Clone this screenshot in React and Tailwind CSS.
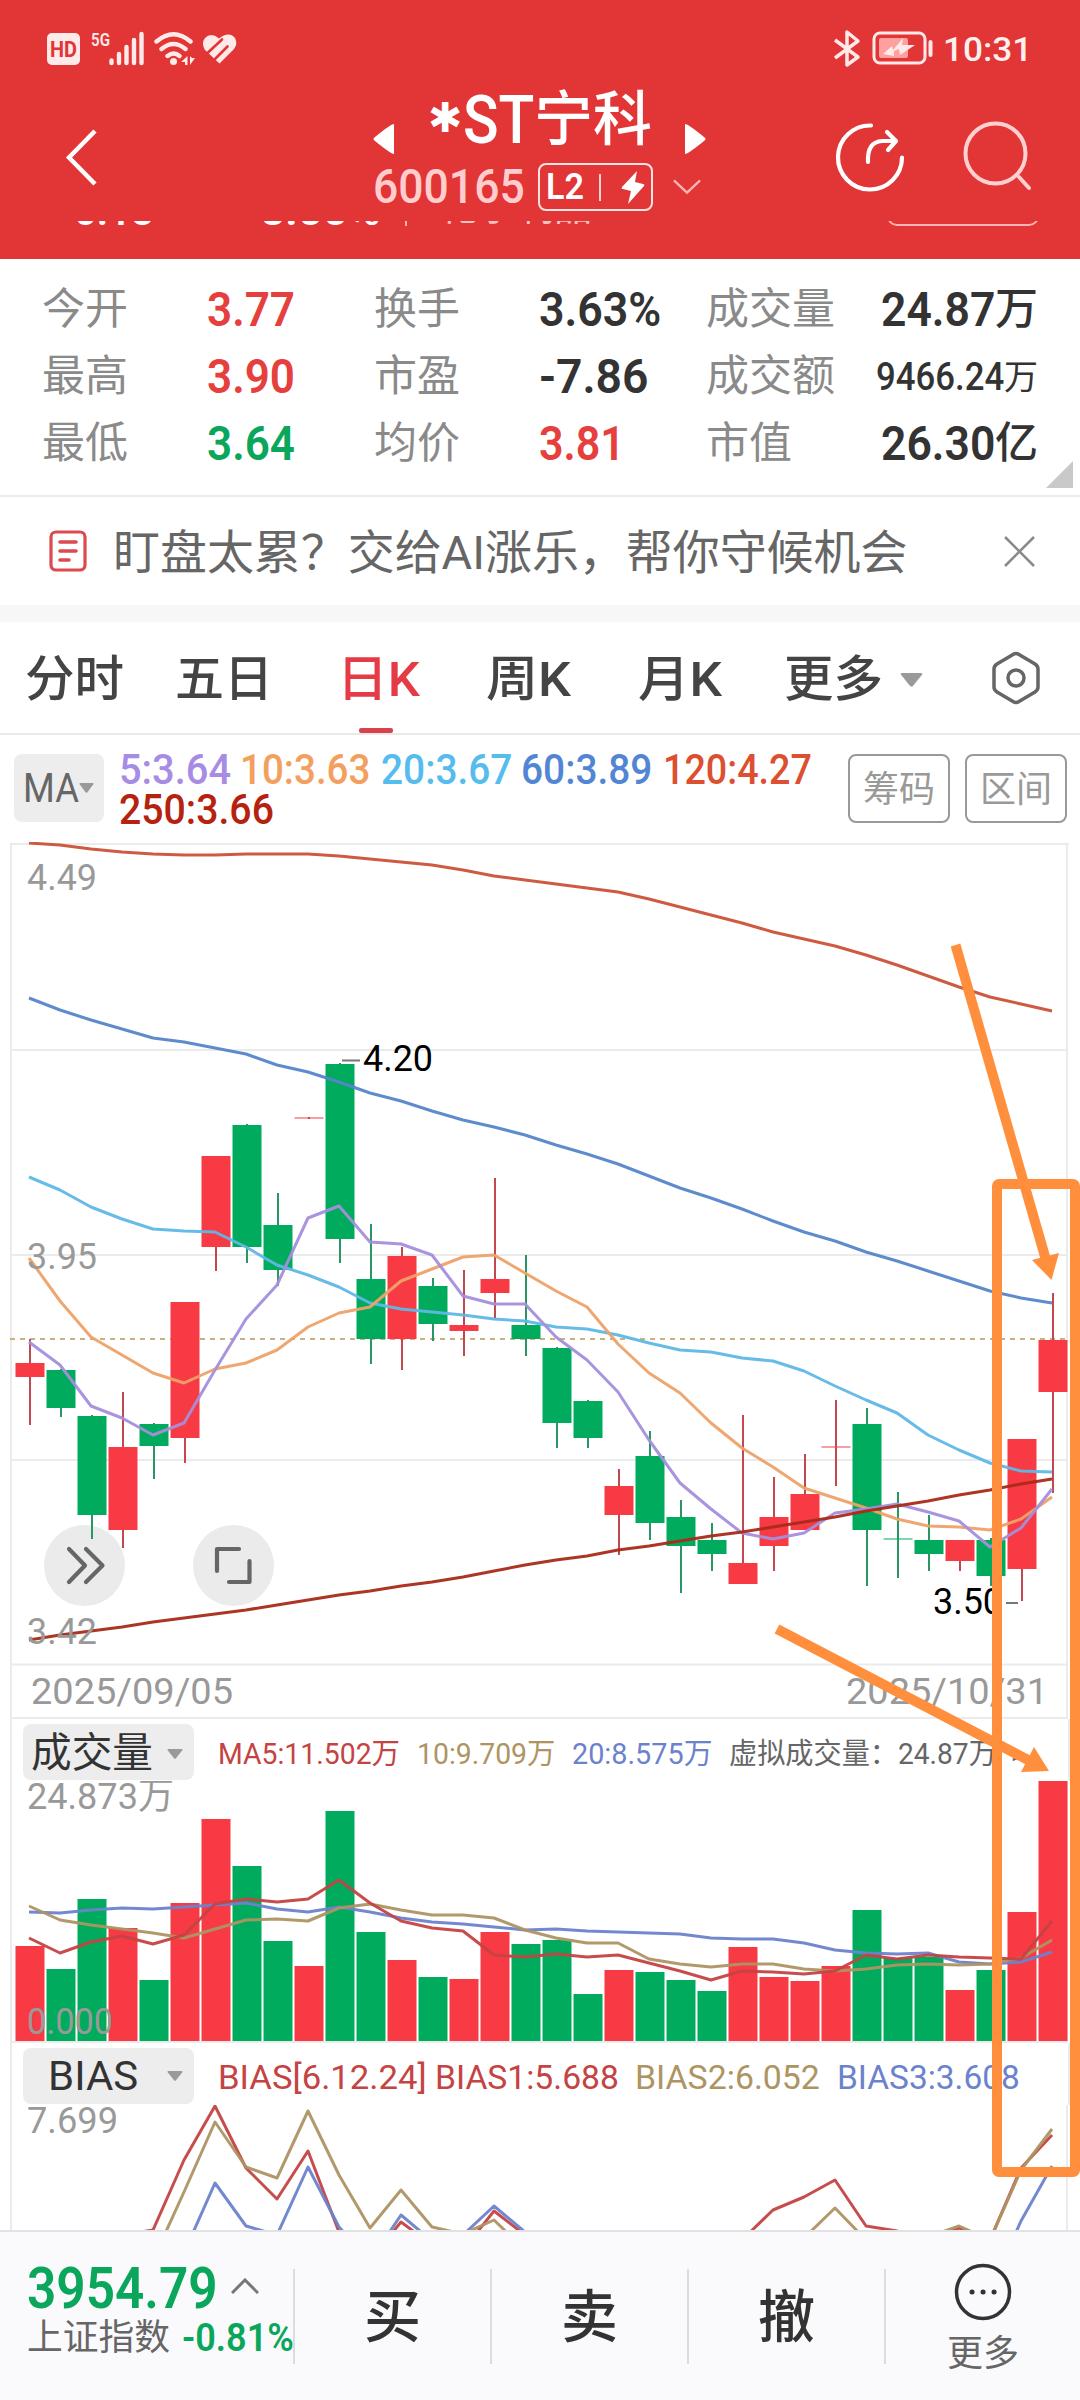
import { useLayoutEffect, useRef, useState } from 'react';

const RED = '#f83a44';
const GREEN = '#00ab5e';

// Candles: [direction, bodyTop, bodyBottom, high, low]
const CANDLES = [
  ['r', 1363, 1377, 1339, 1425], ['g', 1370, 1408, 1369, 1417], ['g', 1416, 1515, 1415, 1539],
  ['r', 1447, 1530, 1392, 1548], ['g', 1424, 1446, 1423, 1479], ['r', 1302, 1438, 1302, 1463],
  ['r', 1156, 1247, 1156, 1271], ['g', 1125, 1247, 1124, 1263], ['g', 1225, 1270, 1193, 1286],
  ['r', 1117, 1119, 1117, 1119], ['g', 1064, 1239, 1063, 1263], ['g', 1279, 1339, 1224, 1364],
  ['r', 1256, 1339, 1247, 1370], ['g', 1286, 1324, 1278, 1341], ['r', 1325, 1331, 1270, 1356],
  ['r', 1279, 1293, 1178, 1319], ['g', 1325, 1339, 1255, 1356], ['g', 1348, 1423, 1347, 1448],
  ['g', 1401, 1438, 1400, 1448], ['r', 1486, 1515, 1469, 1555], ['g', 1456, 1523, 1431, 1540],
  ['g', 1517, 1546, 1500, 1593], ['g', 1540, 1554, 1523, 1571], ['r', 1563, 1584, 1415, 1584],
  ['r', 1517, 1546, 1477, 1571], ['r', 1494, 1530, 1454, 1530], ['r', 1446, 1448, 1400, 1486],
  ['g', 1424, 1530, 1408, 1586], ['g', 1538, 1540, 1492, 1578], ['g', 1540, 1554, 1515, 1571],
  ['r', 1540, 1561, 1540, 1571], ['g', 1540, 1576, 1538, 1586], ['r', 1439, 1569, 1439, 1601],
  ['r', 1340, 1392, 1293, 1493],
];

const VOL_TOPS = [
  1946, 1969, 1899, 1928, 1980, 1903, 1819, 1866, 1941, 1966, 1811, 1932, 1960, 1977, 1979, 1932, 1944,
  1940, 1994, 1970, 1972, 1980, 1991, 1947, 1977, 1981, 1966, 1910, 1958, 1957, 1990, 1970, 1912, 1780,
];

const PRICE_LINES = [
  { color: '#cb5237', y: [843, 845, 849, 852, 854, 855, 855, 854, 854, 854, 856, 859, 862, 865, 870, 876, 880, 884, 888, 892, 899, 907, 915, 923, 932, 939, 946, 955, 965, 976, 987, 997, 1004, 1011] },
  { color: '#5585c9', y: [998, 1010, 1020, 1029, 1038, 1042, 1048, 1054, 1065, 1072, 1082, 1093, 1101, 1111, 1120, 1127, 1135, 1145, 1154, 1164, 1176, 1188, 1198, 1209, 1221, 1232, 1241, 1252, 1261, 1271, 1281, 1291, 1298, 1303] },
  { color: '#5fb8e6', y: [1177, 1190, 1207, 1219, 1229, 1231, 1232, 1247, 1265, 1275, 1287, 1303, 1309, 1312, 1315, 1319, 1321, 1327, 1329, 1335, 1343, 1350, 1352, 1358, 1361, 1371, 1386, 1400, 1413, 1435, 1450, 1463, 1471, 1472] },
  { color: '#eea269', y: [1258, 1301, 1337, 1355, 1373, 1383, 1369, 1363, 1350, 1327, 1313, 1307, 1281, 1269, 1257, 1255, 1273, 1291, 1307, 1344, 1373, 1393, 1423, 1448, 1467, 1488, 1498, 1508, 1519, 1526, 1527, 1530, 1519, 1497] },
  { color: '#a58edb', y: [1342, 1365, 1406, 1418, 1435, 1423, 1370, 1319, 1285, 1218, 1206, 1242, 1244, 1255, 1296, 1304, 1304, 1337, 1360, 1392, 1440, 1483, 1509, 1533, 1539, 1533, 1513, 1509, 1504, 1512, 1521, 1547, 1528, 1489] },
  { color: '#a92a18', y: [1640, 1635, 1631, 1627, 1622, 1618, 1614, 1610, 1605, 1600, 1595, 1591, 1586, 1582, 1577, 1571, 1565, 1560, 1556, 1550, 1546, 1541, 1536, 1532, 1527, 1522, 1517, 1511, 1506, 1501, 1495, 1490, 1484, 1479] },
];

const VOL_LINES = [
  { color: '#6b82cc', y: [1912, 1913, 1910, 1908, 1909, 1907, 1905, 1903, 1909, 1912, 1907, 1912, 1918, 1922, 1924, 1927, 1930, 1929, 1931, 1932, 1933, 1934, 1938, 1939, 1939, 1943, 1950, 1953, 1954, 1953, 1962, 1964, 1962, 1952] },
  { color: '#ae9463', y: [1906, 1920, 1925, 1929, 1933, 1938, 1929, 1920, 1919, 1921, 1908, 1904, 1910, 1915, 1915, 1918, 1930, 1938, 1943, 1943, 1959, 1964, 1967, 1964, 1964, 1969, 1971, 1969, 1965, 1964, 1965, 1964, 1958, 1940] },
  { color: '#c44343', y: [1938, 1953, 1942, 1936, 1944, 1935, 1904, 1899, 1902, 1899, 1880, 1903, 1921, 1928, 1931, 1955, 1957, 1954, 1957, 1955, 1963, 1971, 1980, 1971, 1972, 1974, 1971, 1955, 1959, 1955, 1957, 1958, 1959, 1921] },
];

const BIAS_LINES = [
  { color: '#c44343', y: [2260, 2260, 2250, 2235, 2230, 2160, 2106, 2168, 2199, 2151, 2232, 2260, 2222, 2245, 2250, 2211, 2235, 2260, 2270, 2270, 2270, 2270, 2260, 2240, 2210, 2197, 2180, 2226, 2231, 2240, 2228, 2240, 2168, 2135] },
  { color: '#6b82cc', y: [2290, 2290, 2290, 2290, 2280, 2253, 2183, 2226, 2235, 2167, 2227, 2261, 2215, 2241, 2235, 2206, 2232, 2260, 2290, 2290, 2290, 2290, 2290, 2290, 2290, 2290, 2290, 2290, 2290, 2290, 2290, 2290, 2221, 2166] },
  { color: '#ae9463', y: [2290, 2290, 2290, 2290, 2260, 2192, 2122, 2167, 2178, 2111, 2175, 2228, 2190, 2227, 2234, 2220, 2250, 2290, 2290, 2290, 2290, 2290, 2290, 2290, 2270, 2238, 2208, 2240, 2260, 2237, 2226, 2240, 2170, 2129] },
];

const xAt = (i) => 29.5 + 31 * i;
const toPoints = (ys) => ys.map((y, i) => `${xAt(i) - 0.5},${y}`).join(' ');

// Squeezes a line of text horizontally so that it fills exactly `w` pixels
const Fit = ({ w, className = '', children }) => {
  const ref = useRef(null);
  const [scale, setScale] = useState(1);
  useLayoutEffect(() => {
    setScale(w / ref.current.offsetWidth);
  }, [w]);
  return (
    <span className={`block shrink-0 ${className}`} style={{ width: w }}>
      <span ref={ref} className="inline-block origin-left whitespace-nowrap" style={{ transform: `scaleX(${scale})` }}>
        {children}
      </span>
    </span>
  );
};

const Lines = ({ lines, width = 3 }) =>
  lines.map((l) => (
    <polyline key={l.color} points={toPoints(l.y)} fill="none" stroke={l.color} strokeWidth={width} strokeLinejoin="round" strokeOpacity="0.95" />
  ));

const Label = ({ x, y, w, fill = '#999', size = 37, children }) => (
  <text x={x} y={y} textLength={w} lengthAdjust="spacingAndGlyphs" fontSize={size} fill={fill}>{children}</text>
);

const Caret = ({ className = '' }) => (
  <svg viewBox="0 0 16 10" preserveAspectRatio="none" className={`shrink-0 ${className}`}>
    <path d="M1.5 0h13q1.500 0 .8 1.200L9 9.200q-1 1-2 0L.7 1.200Q0 0 1.500 0Z" fill="currentColor" />
  </svg>
);

const StatusBar = () => (
  <div className="flex h-[98px] items-center justify-between pr-[48px] pl-[46px]">
    <svg viewBox="46 30 194 38" className="h-[38px] w-[194px]" fill="none" stroke="#ffe9e9" strokeLinecap="round">
      <rect x="47" y="33" width="33" height="32" rx="5" fill="#ffe9e9" stroke="none" />
      <text x="50" y="57" textLength="27" lengthAdjust="spacingAndGlyphs" fontSize="22" fontWeight="700" fill="#e23536" stroke="none">HD</text>
      <text x="91" y="46" textLength="19" lengthAdjust="spacingAndGlyphs" fontSize="19" fontWeight="600" fill="#ffe9e9" stroke="none">5G</text>
      <path d="M111.500 60.500v2.500M119 54v9M126.500 47v16M134 40v23M141.500 34v29" strokeWidth="4.400" />
      <path d="M156.500 41.500q17-14.500 34 0M161.500 49q12-10 24 0M167.500 56q6.500-5 12 0" strokeWidth="4.400" />
      <circle cx="173.500" cy="61.500" r="3.500" fill="#ffe9e9" stroke="none" />
      <path d="M187.500 56v9h-2.500v-3h-4ZM190 56v9l5-7h-3Z" fill="#ffe9e9" stroke="none" />
      <path d="M219.500 63.500L205 50Q201 43 205 38Q211 32 219 38.500Q229 31 235 38Q238 44 234 49Z" fill="#ffe9e9" stroke="none" />
      <path d="M208 52.500L222 39.500M215 59L227.500 46.500" stroke="#e23536" strokeWidth="2.600" />
    </svg>
    <div className="flex items-center">
      <svg viewBox="830 30 106 38" className="h-[38px] w-[106px]" fill="none" stroke="#ffe9e9">
        <path d="M834 40l23 17-11 8V32l11 9-23 17" strokeWidth="3.500" strokeLinejoin="round" />
        <rect x="873" y="33" width="51" height="30" rx="6" strokeWidth="3" />
        <rect x="878" y="38" width="29" height="20" rx="2" fill="#ff9f9f" stroke="none" />
        <path d="M902 38l-1 7h13l-15 10-1-6-5 2 0 5-11-2 9-8 1 4Z" fill="#ffe9e9" stroke="none" />
        <path d="M929.500 42v13" strokeWidth="4" strokeLinecap="round" />
      </svg>
      <Fit w={89} className="ml-[6px] text-[34px] leading-none font-medium text-[#fff0f0]">10:31</Fit>
    </div>
  </div>
);

const Header = () => (
  <header className="flex h-[259px] flex-col bg-[#e23536]">
    <StatusBar />
    <div className="flex h-[123px] shrink-0 pl-[62px] pr-[44px]">
      <svg viewBox="62 98 40 123" className="h-[123px] w-[40px] shrink-0" fill="none" stroke="#fff" strokeWidth="4.500">
        <path d="M95 131L69 157.500L95 184" />
      </svg>
      <div className="ml-[266px] flex w-[345px] shrink-0 flex-col">
        <div className="flex h-[53px] items-start pl-[5px]">
          <svg viewBox="0 0 21 30" className="mt-[26px] h-[30px] w-[21px] shrink-0" fill="#fff"><path d="M21 0v30Q18 30 2 17q-3-2 0-4Q18 0 21 0Z" /></svg>
          <div className="ml-[34px] flex h-[53px] w-[258px] shrink-0 items-start leading-none text-white">
            <span className="w-[35px] shrink-0 font-['DejaVu_Sans'] text-[41px] font-bold">✱</span>
            <Fit w={71} className="-mt-[11px] text-[67px] font-medium">ST</Fit>
            <Fit w={118} className="-mt-[8px] text-[59px] font-medium">宁科</Fit>
            <svg viewBox="0 0 21 30" className="ml-[33px] mt-[26px] h-[30px] w-[21px] shrink-0" fill="#fff"><path d="M0 0v30Q3 30 19 17q3-2 0-4Q3 0 0 0Z" /></svg>
          </div>
        </div>
        <div className="mt-[11px] flex h-[50px] items-center">
          <Fit w={152} className="ml-[5px] text-[48px] leading-none font-medium text-[#ffcdcd]">600165</Fit>
          <div className="ml-[13px] flex h-[48px] w-[115px] shrink-0 items-center rounded-[8px] border-2 border-[#ffe3e3] pl-[6px] text-white">
            <Fit w={38} className="text-[36px] leading-none font-semibold">L2</Fit>
            <span className="ml-[15px] h-[27px] w-[2px] bg-[#ffd0d0]" />
            <svg viewBox="0 0 24 34" className="ml-[20px] h-[34px] w-[24px]" fill="#fff"><path d="M16 1L1 17q-1 2 1 2l8 2-3 13L23 16q1-2-1-2l-8-2Z" /></svg>
          </div>
          <svg viewBox="0 0 30 16" className="ml-[20px] h-[16px] w-[28px] shrink-0" fill="none" stroke="#ffb5b5" strokeWidth="2.500"><path d="M1 1l14 13L29 1" /></svg>
        </div>
      </div>
      <svg viewBox="832 98 204 123" className="ml-auto h-[123px] w-[204px] shrink-0" fill="none" strokeLinecap="round">
        <g stroke="#fff" strokeWidth="4.200" strokeLinejoin="round">
          <path d="M871 125.500a32 32 0 1 0 31 32" />
          <path d="M868 162q-1-20 14-21h13M887 132l9 9-8 9" />
        </g>
        <g stroke="#ffd0d0" strokeWidth="4">
          <circle cx="995.500" cy="153.500" r="30" />
          <path d="M1019 177l10 11" />
        </g>
      </svg>
    </div>
    {/* quote row, scrolled under the title bar */}
    <div className="flex h-[5px] shrink-0 items-end overflow-hidden pl-[74px] leading-none text-white">
      <Fit w={80} className="-mb-[6px] text-[40px] font-semibold">0.18</Fit>
      <Fit w={120} className="-mb-[6px] ml-[106px] text-[40px] font-semibold">5.00%</Fit>
      <span className="ml-[25px] h-[5px] w-[2px] bg-[#ffb5b5]" />
      <span className="ml-[33px] shrink-0 text-[38px] text-[#ffc0c0]">化学制品</span>
      <span className="ml-auto mr-[41px] h-[40px] w-[152px] shrink-0 rounded-[10px] border-2 border-[#ffb5b5]" />
    </div>
  </header>
);

const STATS = [
  [['今开', '3.77', 'text-[#e5403d]', 88], ['换手', '3.63%', 'text-[#333]', 122], ['成交量', '24.87', 'text-[#333]', 114, '万']],
  [['最高', '3.90', 'text-[#e5403d]', 88], ['市盈', '-7.86', 'text-[#333]', 110], ['成交额', '9466.24', 'text-[#333]', 128, '万']],
  [['最低', '3.64', 'text-[#0aa65c]', 88], ['均价', '3.81', 'text-[#e5403d]', 86], ['市值', '26.30', 'text-[#333]', 114, '亿']],
];

const Stats = () => (
  <section className="relative h-[238px] border-b-2 border-[#ebebeb] pt-[17px] pl-[42px] pr-[42px]">
    {STATS.map((row, r) => (
      <div key={r} className="flex h-[67px] items-center">
        {row.map(([label, value, cls, w, unit], c) => (
          <div key={label} className={`flex items-center ${c < 2 ? 'w-[332px]' : 'flex-1'}`}>
            <span className={`text-[43px] leading-none text-[#8a8a8a] ${c < 2 ? 'w-[165px]' : ''}`}>{label}</span>
            <Fit w={w} className={`leading-none ${cls} ${value.length > 6 ? 'text-[38px] font-medium' : 'text-[48px] font-semibold'} ${unit ? 'ml-auto' : ''}`}>{value}</Fit>
            {unit && <span className={`leading-none text-[#333] ${value.length > 6 ? 'text-[34px]' : 'text-[43px] font-medium'}`}>{unit}</span>}
          </div>
        ))}
      </div>
    ))}
    <svg viewBox="0 0 27 27" className="absolute right-[7px] bottom-[7px] size-[27px]" fill="#c9c9c9"><path d="M27 0v27H0Z" /></svg>
  </section>
);

const Banner = () => (
  <section className="flex h-[108px] items-center pl-[49px] pr-[45px]">
    <svg viewBox="0 0 38 42" className="h-[42px] w-[38px]" fill="none" stroke="#dc4a50">
      <rect x="2" y="2" width="34" height="38" rx="5" strokeWidth="3.200" />
      <path d="M11 12h16M11 21h16M11 30h9" strokeWidth="3.600" strokeLinecap="round" />
    </svg>
    <Fit w={794} className="ml-[26px] pt-[2px] text-[47px] leading-none text-[#666]">盯盘太累？交给AI涨乐，帮你守候机会</Fit>
    <svg viewBox="0 0 30 30" className="ml-auto size-[31px]" stroke="#8a8a8a" strokeWidth="2.500"><path d="M1 1l28 28M29 1L1 29" /></svg>
  </section>
);

const TABS = [
  { name: '分时', w: 99, ml: 'ml-[25px]' },
  { name: '五日', w: 98, ml: 'ml-[51px]' },
  { name: '日K', w: 83, ml: 'ml-[64px]', active: true },
  { name: '周K', w: 85, ml: 'ml-[66px]' },
  { name: '月K', w: 84, ml: 'ml-[67px]' },
  { name: '更多', w: 99, ml: 'ml-[62px]' },
];

const Tabs = () => (
  <nav className="flex h-[113px] border-b-2 border-[#e9e9e9]">
    {TABS.map((t) => (
      <div key={t.name} className={`flex flex-col items-center ${t.ml}`}>
        <Fit w={t.w} className={`mt-[32px] h-[74px] text-[49px] leading-[52px] ${t.active ? 'font-medium text-[#e53b46]' : 'font-medium text-[#444]'}`}>{t.name}</Fit>
        {t.active && <span className="-ml-[6px] h-[5px] w-[34px] rounded-[2px] bg-[#d9424c]" />}
      </div>
    ))}
    <Caret className="mt-[51px] ml-[17px] h-[14px] w-[23px] text-[#9a9a9a]" />
    <svg viewBox="0 0 48 54" className="mt-[29px] ml-[69px] h-[54px] w-[48px]" fill="none" stroke="#666" strokeWidth="3.500">
      <path d="M21 3.500q3-2 6 0L43 13q3 2 3 5v18q0 3-3 5L27 50.500q-3 2-6 0L5 41q-3-2-3-5V18q0-3 3-5Z" />
      <circle cx="24" cy="27" r="8" />
    </svg>
  </nav>
);

const MovingAverages = () => (
  <section className="flex h-[107px] pt-[19px] pl-[14px] pr-[14px]">
    <div className="flex h-[68px] w-[90px] shrink-0 items-center rounded-[8px] bg-[#ededed] pl-[9px] text-[#666]">
      <Fit w={56} className="text-[41px] leading-none">MA</Fit>
      <Caret className="h-[10px] w-[15px] text-[#999]" />
    </div>
    <div className="-mt-[5px] ml-[15px] flex w-[730px] shrink-0 flex-wrap content-start text-[43px] leading-[40px] font-medium">
      <Fit w={112} className="mr-[9px] text-[#a78ce6]">5:3.64</Fit>
      <Fit w={130} className="mr-[11px] text-[#f3a05f]">10:3.63</Fit>
      <Fit w={131} className="mr-[9px] text-[#55bcee]">20:3.67</Fit>
      <Fit w={131} className="mr-[11px] text-[#5286d4]">60:3.89</Fit>
      <Fit w={149} className="text-[#dc4f31]">120:4.27</Fit>
      <Fit w={155} className="text-[#b5220f]">250:3.66</Fit>
    </div>
    <div className="-ml-px flex h-[69px] w-[102px] shrink-0 items-center justify-center rounded-[8px] border-2 border-[#999] pt-[2px] text-[36px] text-[#999]">筹码</div>
    <div className="ml-[15px] flex h-[69px] w-[102px] shrink-0 items-center justify-center rounded-[8px] border-2 border-[#999] pt-[2px] text-[36px] text-[#999]">区间</div>
  </section>
);

const PriceChart = () => (
  <svg viewBox="0 842 1080 877" className="block h-[877px] w-full">
    <g stroke="#ebebeb" strokeWidth="2">
      <path d="M10 844H1069M11 1050H1067M11 1255H1067M11 1460H1067M11 1664.500H1067M11 1718H1067" />
      <path d="M11 844V1719M1067 844V1719" />
    </g>
    <circle cx="84.500" cy="1565.500" r="40.500" fill="#ebebeb" />
    <circle cx="233.500" cy="1565.500" r="40.500" fill="#ebebeb" />
    <g stroke="#666" strokeWidth="4.200" fill="none" strokeLinecap="round" strokeLinejoin="round">
      <path d="M69 1549l16 16.500-16 16.500M86 1549l16.500 16.500-16.500 16.500" />
      <path d="M239 1549h-22v22M249.500 1561v21h-20.500" />
    </g>
    <path d="M10 1339H1067" stroke="#c9b181" strokeWidth="2" strokeDasharray="5 5" />
    {CANDLES.map(([dir, top, bottom, high, low], i) => (
      <g key={i} fill={dir === 'r' ? RED : GREEN}>
        <rect x={xAt(i) - 0.5} y={high} width="2" height={low - high} fill={dir === 'r' ? '#c0484e' : '#2a9663'} />
        <rect x={xAt(i) - 14} y={top} width="29" height={bottom - top} opacity={bottom - top < 3 ? 0.5 : 1} />
      </g>
    ))}
    <Lines lines={PRICE_LINES} />
    <path d="M342 1067.500h18" stroke="none" />
    <path d="M342 1060.500h18M1006 1603h12" stroke="#777" strokeWidth="2" />
    <Label x={27} y={890} w={70}>4.49</Label>
    <Label x={27} y={1269} w={70}>3.95</Label>
    <Label x={27} y={1644} w={70}>3.42</Label>
    <Label x={363} y={1071} w={70} fill="#000">4.20</Label>
    <Label x={933} y={1614} w={70} fill="#000">3.50</Label>
    <Label x={31} y={1704} w={202}>2025/09/05</Label>
    <Label x={846} y={1704} w={202}>2025/10/31</Label>
  </svg>
);

const PanelTitle = ({ name, w, className, children }) => (
  <div className="mx-[10px] flex h-[62px] border-x-2 border-[#ebebeb] pt-[5px] pl-[11px]">
    <div className={`flex h-[56px] w-[171px] shrink-0 items-center rounded-[8px] bg-[#ededed] text-[#333] ${className}`}>
      <Fit w={w} className="leading-none">{name}</Fit>
      <Caret className="ml-auto mr-[11px] h-[10px] w-[16px] text-[#999]" />
    </div>
    {children}
  </div>
);

const VolumePanel = () => (
  <section>
    <PanelTitle name="成交量" w={122} className="pt-[3px] pl-[8px] text-[41px]">
      <div className="flex h-[56px] items-center pt-[5px] pl-[24px] text-[29px] leading-none">
        <Fit w={182} className="text-[#c44343]">MA5:11.502万</Fit>
        <Fit w={138} className="ml-[17px] text-[#ae9463]">10:9.709万</Fit>
        <Fit w={140} className="ml-[17px] text-[#6b82cc]">20:8.575万</Fit>
        <Fit w={268} className="ml-[17px] text-[#666]">虚拟成交量：24.87万</Fit>
        <Fit w={14} className="ml-[14px] text-[#666]">&gt;</Fit>
      </div>
    </PanelTitle>
    <svg viewBox="0 1781 1080 262" className="block h-[262px] w-full">
      <path d="M11 1780V2043M1067 1780V2043M11 2042H1067" stroke="#ebebeb" strokeWidth="2" />
      {VOL_TOPS.map((top, i) => (
        <rect key={i} x={xAt(i) - 14} y={top} width="29" height={2041 - top} fill={CANDLES[i][0] === 'r' ? RED : GREEN} />
      ))}
      <Lines lines={VOL_LINES} />
      <Label x={27} y={1809} w={147}>24.873万</Label>
      <Label x={27} y={2034} w={86}>0.000</Label>
    </svg>
  </section>
);

const BiasPanel = () => (
  <section>
    <PanelTitle name="BIAS" w={90} className="pl-[25px] text-[41px]">
      <div className="flex h-[56px] items-center pt-[2px] pl-[24px] text-[34px] leading-none">
        <Fit w={209} className="text-[#c44343]">BIAS[6.12.24]</Fit>
        <Fit w={184} className="ml-[8px] text-[#c44343]">BIAS1:5.688</Fit>
        <Fit w={185} className="ml-[16px] text-[#ae9463]">BIAS2:6.052</Fit>
        <Fit w={183} className="ml-[17px] text-[#6b82cc]">BIAS3:3.608</Fit>
      </div>
    </PanelTitle>
    <svg viewBox="0 2105 1080 125" className="block h-[125px] w-full">
      <path d="M11 2105V2231M1067 2105V2231" stroke="#ebebeb" strokeWidth="2" />
      <Lines lines={BIAS_LINES} />
      <Label x={27} y={2133} w={91}>7.699</Label>
    </svg>
  </section>
);

// Hand-drawn marks laid over the charts
const Annotations = () => (
  <svg viewBox="0 842 1080 1388" className="pointer-events-none absolute inset-0 h-[1388px] w-full" fill="none" stroke="#ff8f3c" strokeWidth="10">
    <rect x="997" y="1184" width="78" height="988" rx="2" strokeLinejoin="round" />
    <path d="M955.500 945L1046 1260M777 1629L1030 1761" />
    <path d="M1051.500 1280L1032 1260L1059 1253ZM1049 1771L1034 1747L1021 1772Z" fill="#ff8f3c" stroke="none" />
  </svg>
);

const BottomBar = () => (
  <footer className="flex h-[170px] border-t-2 border-[#e2e2e4] bg-[#fafafc]">
    <div className="w-[293px] pl-[27px]">
      <div className="mt-[28px] flex h-[56px] items-center">
        <Fit w={191} className="text-[57px] leading-none font-semibold text-[#0aa65c]">3954.79</Fit>
        <svg viewBox="0 0 28 16" className="ml-[13px] -mt-[4px] h-[16px] w-[28px]" fill="none" stroke="#777" strokeWidth="3"><path d="M1 15L14 2l13 13" /></svg>
      </div>
      <div className="flex h-[44px] items-center">
        <Fit w={143} className="text-[36px] leading-none text-[#666]">上证指数</Fit>
        <Fit w={112} className="ml-[12px] text-[38px] leading-none font-semibold text-[#0aa65c]">-0.81%</Fit>
      </div>
    </div>
    {['买', '卖', '撤'].map((action) => (
      <div key={action} className="flex w-[197px] items-center">
        <span className="h-[95px] w-[2px] bg-[#dcdcde]" />
        <span className="flex-1 pt-[2px] text-center text-[57px] leading-none font-medium text-[#333]">{action}</span>
      </div>
    ))}
    <div className="flex flex-1 items-center">
      <span className="h-[95px] w-[2px] bg-[#dcdcde]" />
      <div className="flex flex-1 flex-col items-center">
        <svg viewBox="0 0 58 58" className="mt-[3px] size-[58px]" fill="none" stroke="#333" strokeWidth="3.500">
          <circle cx="29" cy="29" r="26.500" />
          <path d="M18 29h.1M29 29h.1M40 29h.1" strokeWidth="5" strokeLinecap="round" />
        </svg>
        <span className="mt-[15px] text-[36px] leading-none text-[#666]">更多</span>
      </div>
    </div>
  </footer>
);

const App = () => (
  <div className="w-[1080px] overflow-hidden bg-white font-['Roboto','Noto_Sans_CJK_SC',sans-serif]">
    <Header />
    <Stats />
    <Banner />
    <div className="h-[17px] bg-[#f7f7f7]" />
    <Tabs />
    <MovingAverages />
    <main className="relative">
      <PriceChart />
      <VolumePanel />
      <BiasPanel />
      <Annotations />
    </main>
    <BottomBar />
  </div>
);

export default App;
